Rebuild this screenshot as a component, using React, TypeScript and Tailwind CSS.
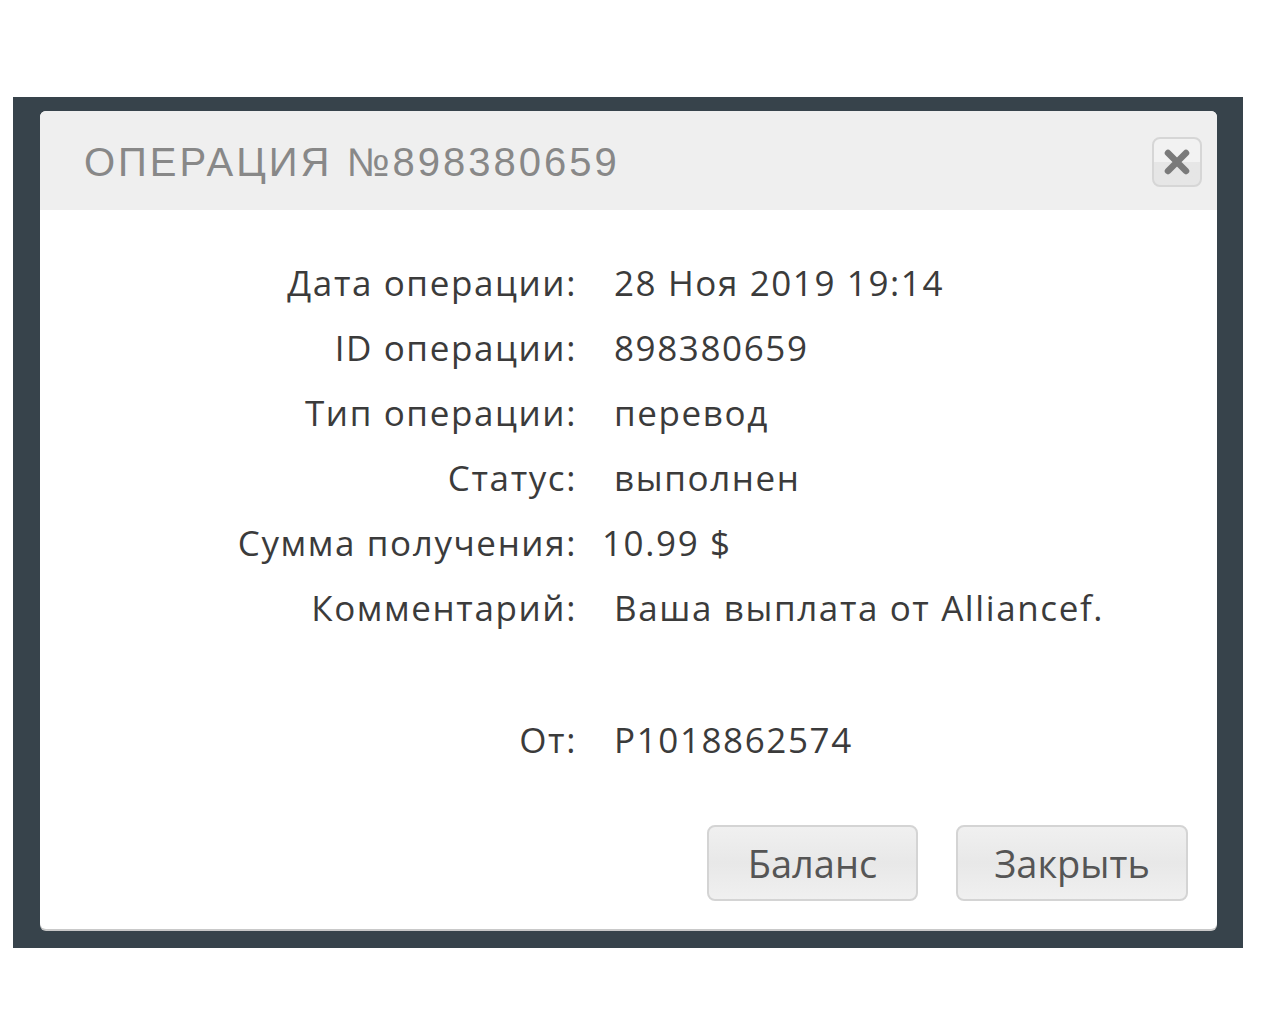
const rows = [
    { label: "Дата операции:", value: "28 Ноя 2019 19:14" },
    { label: "ID операции:", value: "898380659" },
    { label: "Тип операции:", value: "перевод" },
    { label: "Статус:", value: "выполнен" },
    { label: "Сумма получения:", value: "10.99 $", shift: true },
    { label: "Комментарий:", value: "Ваша выплата от Alliancef." },
]

const labelFont = { fontFamily: "'Open Sans', 'Noto Sans', sans-serif" }

const CloseIcon = () => (
    <svg width="28" height="28" viewBox="0 0 28 28" className="text-[#7a7a7a]">
        <path d="M5 5 L23 23 M23 5 L5 23" stroke="currentColor" strokeWidth="6.5" strokeLinecap="round" />
    </svg>
)

const App = () => {
    return (
        <div className="min-h-screen w-[1280px] bg-white pt-[97px]">
            <div className="ml-[13px] w-[1230px] h-[851px] bg-[#37434b] pt-[14px] pl-[27px]">
                <div className="w-[1177px] h-[818px] bg-white rounded-md overflow-hidden shadow-[0_2px_0_#c9c9c9] flex flex-col">
                    <header className="h-[99px] bg-[#efefef] flex items-center justify-between pl-[44px] pr-[15px]">
                        <h1
                            className="text-[40px] tracking-[3px] text-[#888] pt-[3px]"
                            style={{ fontFamily: "'Liberation Sans', sans-serif" }}
                        >
                            ОПЕРАЦИЯ №898380659
                        </h1>
                        <button className="mt-[3px] size-[50px] rounded-lg border-2 border-[#d6d6d6] bg-gradient-to-b from-[#f2f2f2] from-50% to-[#e6e6e6] to-50% flex items-center justify-center">
                            <CloseIcon />
                        </button>
                    </header>
                    <section className="flex-1 flex flex-col pt-[49px]">
                        <div className="grid grid-cols-[537px_1fr] gap-x-[37px] text-[#3b3b3b] text-[35px] tracking-[1.6px]" style={labelFont}>
                            {rows.map((r) => (
                                <div key={r.label} className="contents">
                                    <div className="h-[65px] text-right leading-[48px]">{r.label}</div>
                                    <div className={`h-[65px] leading-[48px] ${r.shift ? "-ml-[12px]" : ""}`}>{r.value}</div>
                                </div>
                            ))}
                            <div className="h-[67px]" />
                            <div className="h-[67px]" />
                            <div className="h-[65px] text-right leading-[48px]">От:</div>
                            <div className="h-[65px] leading-[48px]">P1018862574</div>
                        </div>
                        <div className="mt-auto mb-[28px] mr-[29px] flex justify-end gap-[38px]" style={labelFont}>
                            <button className="w-[211px] h-[76px] rounded-lg border-2 border-[#d4d4d4] bg-gradient-to-b from-[#f0f0f0] via-[#e8e8e8] to-[#f0f0f0] text-[38px] text-[#555]">
                                Баланс
                            </button>
                            <button className="w-[232px] h-[76px] rounded-lg border-2 border-[#d4d4d4] bg-gradient-to-b from-[#f0f0f0] via-[#e8e8e8] to-[#f0f0f0] text-[38px] text-[#555]">
                                Закрыть
                            </button>
                        </div>
                    </section>
                </div>
            </div>
        </div>
    )
}

export default App
